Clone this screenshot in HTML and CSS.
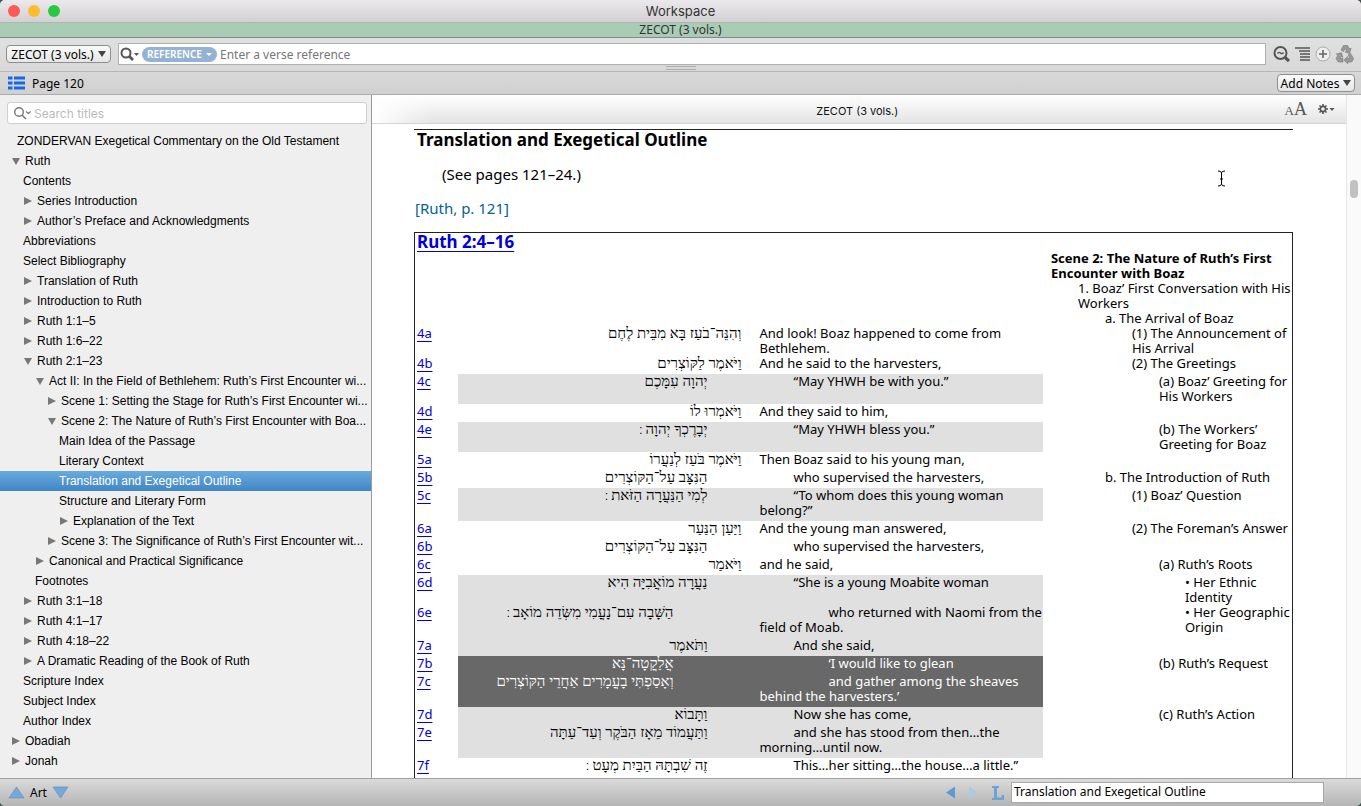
FILE: index.html
```html
<!DOCTYPE html>
<html lang="en">
<head>
    <meta charset="utf-8">
    <title>Workspace</title>
    <link rel="stylesheet" href="styles.css">
</head>
<body>
    <div class="window">
        <header class="titlebar">
            <div class="lights">
                <button class="light red" aria-label="Close"></button>
                <button class="light yellow" aria-label="Minimize"></button>
                <button class="light green" aria-label="Zoom"></button>
            </div>
            <h1>Workspace</h1>
        </header>
        <div class="tab">ZECOT (3 vols.)</div>

        <div class="toolbar">
            <button class="menu-btn module">ZECOT (3 vols.) <span class="down"></span></button>
            <div class="search">
                <svg width="19" height="15" viewBox="0 0 19 15"><circle cx="6" cy="6" r="4.500" fill="none" stroke="#555" stroke-width="2"/><path d="M9 9l4 4" stroke="#555" stroke-width="2.600"/><path d="M14 6h5l-2.500 3z" fill="#555"/></svg>
                <button class="pill">REFERENCE <span class="down small"></span></button>
                <input type="text" aria-label="Verse reference" placeholder="Enter a verse reference">
            </div>
            <div class="tools">
                <button aria-label="Search again"><svg width="18" height="18" viewBox="0 0 18 18"><circle cx="7.500" cy="8" r="6" fill="none" stroke="#555" stroke-width="2"/><path d="M12 12.500l4 3.500" stroke="#555" stroke-width="3"/><path d="M4.500 8.500q1.500-2 3-.5t3-.5" fill="none" stroke="#555" stroke-width="1.300"/></svg></button>
                <button aria-label="Outline"><svg width="16" height="16" viewBox="0 0 16 16"><path d="M0 2h15M4 5h11M5 8h10M5 11h10M5 14h10" stroke="#555" stroke-width="1.500"/></svg></button>
                <button aria-label="Add"><svg width="16" height="16" viewBox="0 0 16 16"><circle cx="8" cy="8" r="7" fill="#eee" stroke="#aaa"/><path d="M8 4v8M4 8h8" stroke="#666" stroke-width="1.600"/></svg></button>
                <button aria-label="Recycle"><svg width="20" height="20" viewBox="0 0 20 20" fill="#999" stroke="#777" stroke-width=".6"><path d="M6 6l2.500-4.500h4L14.500 5l1.700-.8L14.500 9.500 10 8l1.700-1L10.300 4.500 8.500 7.600z"/><path d="M15.500 9.500l3.200 5.200-2 3.300h-4v1.800L9 16l3.700-3.500V14.500h2.500l-2.200-3.600z"/><path d="M8 18H3.200L1 14.500 3 11 1.300 10 6.500 8.700 7.800 13.500 6 12.500l-1.200 2H8z"/></svg></button>
            </div>
        </div>
        <div class="grip"><span></span></div>

        <div class="subbar">
            <svg width="17" height="14" viewBox="0 0 17 14"><path d="M0 2h4.500M6 2h11M0 7h4.500M6 7h11M0 12h4.500M6 12h11" stroke="#1468ea" stroke-width="3"/></svg>
            <span class="page">Page 120</span>
            <button class="menu-btn notes">Add Notes <span class="down"></span></button>
        </div>

        <main class="main">
            <nav class="sidebar">
                <div class="filter">
                    <svg width="19" height="15" viewBox="0 0 19 15"><circle cx="6" cy="6" r="4.300" fill="none" stroke="#777" stroke-width="1.400"/><path d="M9 9l4 4" stroke="#777" stroke-width="1.600"/><path d="M13 5.500l2.300 2 2.300-2" fill="none" stroke="#777" stroke-width="1.200"/></svg>
                    <input type="text" aria-label="Search titles" placeholder="Search titles">
                </div>
                <ul class="toc">
                    <li class="root">ZONDERVAN Exegetical Commentary on the Old Testament</li>
                    <li class="open">Ruth</li>
                    <li class="l1">Contents</li>
                    <li class="l1 closed">Series Introduction</li>
                    <li class="l1 closed">Author’s Preface and Acknowledgments</li>
                    <li class="l1">Abbreviations</li>
                    <li class="l1">Select Bibliography</li>
                    <li class="l1 closed">Translation of Ruth</li>
                    <li class="l1 closed">Introduction to Ruth</li>
                    <li class="l1 closed">Ruth 1:1–5</li>
                    <li class="l1 closed">Ruth 1:6–22</li>
                    <li class="l1 open">Ruth 2:1–23</li>
                    <li class="l2 open">Act II: In the Field of Bethlehem: Ruth’s First Encounter wi...</li>
                    <li class="l3 closed">Scene 1: Setting the Stage for Ruth’s First Encounter wi...</li>
                    <li class="l3 open">Scene 2: The Nature of Ruth’s First Encounter with Boa...</li>
                    <li class="l4">Main Idea of the Passage</li>
                    <li class="l4">Literary Context</li>
                    <li class="l4 selected">Translation and Exegetical Outline</li>
                    <li class="l4">Structure and Literary Form</li>
                    <li class="l4 closed">Explanation of the Text</li>
                    <li class="l3 closed">Scene 3: The Significance of Ruth’s First Encounter wit...</li>
                    <li class="l2 closed">Canonical and Practical Significance</li>
                    <li class="l2">Footnotes</li>
                    <li class="l1 closed">Ruth 3:1–18</li>
                    <li class="l1 closed">Ruth 4:1–17</li>
                    <li class="l1 closed">Ruth 4:18–22</li>
                    <li class="l1 closed">A Dramatic Reading of the Book of Ruth</li>
                    <li class="l1">Scripture Index</li>
                    <li class="l1">Subject Index</li>
                    <li class="l1">Author Index</li>
                    <li class="closed">Obadiah</li>
                    <li class="closed">Jonah</li>
                </ul>
            </nav>

            <section class="reader">
                <div class="reader-head">
                    <span class="reader-title">ZECOT (3 vols.)</span>
                    <button class="font-size" aria-label="Text size"><small>A</small>A</button>
                    <button class="gear" aria-label="Settings"><svg width="17" height="12" viewBox="0 0 17 12"><circle cx="5" cy="6" r="2.600" fill="none" stroke="#555" stroke-width="1.600"/><path d="M5 1v2M5 9v2M0 6h2M8 6h2M1.500 2.500l1.300 1.300M7.200 8.200l1.300 1.300M1.500 9.500l1.300-1.300M7.200 3.800l1.300-1.300" stroke="#555" stroke-width="1.600"/><path d="M11.500 5h5l-2.500 3z" fill="#555"/></svg></button>
                </div>
                <article class="text">
                    <h2>Translation and Exegetical Outline</h2>
                    <p class="see">(See pages 121–24.)</p>
                    <p class="pageref">[Ruth, p. 121]</p>
                    <table>
                        <colgroup><col class="c-ref"><col class="c-heb"><col class="c-eng"><col class="c-out"></colgroup>
                        <tr class="passage"><td colspan="4"><a href="#">Ruth 2:4–16</a></td></tr>
                        <tr class="tight"><td></td><td></td><td></td><td class="out"><div><b>Scene 2: The Nature of Ruth’s First<br>Encounter with Boaz</b></div><div class="o1">1. Boaz’ First Conversation with His<br>Workers</div><div class="o2">a. The Arrival of Boaz</div></td></tr>
                        <tr class="tight"><td><a href="#">4a</a></td><td class="heb" lang="he">וְהִנֵּה־בֹעַז בָּא מִבֵּית לֶחֶם</td><td class="eng">And look! Boaz happened to come from<br>Bethlehem.</td><td class="out"><div class="o3">(1) The Announcement of<br>His Arrival</div></td></tr>
                        <tr><td><a href="#">4b</a></td><td class="heb" lang="he">וַיֹּאמֶר לַקּוֹצְרִים</td><td class="eng">And he said to the harvesters,</td><td class="out"><div class="o3">(2) The Greetings</div></td></tr>
                        <tr class="quote"><td><a href="#">4c</a></td><td class="heb in1" lang="he">יְהוָה עִמָּכֶם</td><td class="eng in1">“May YHWH be with you.”</td><td class="out"><div class="o4">(a) Boaz’ Greeting for<br>His Workers</div></td></tr>
                        <tr><td><a href="#">4d</a></td><td class="heb" lang="he">וַיֹּאמְרוּ לוֹ</td><td class="eng">And they said to him,</td><td class="out"></td></tr>
                        <tr class="quote"><td><a href="#">4e</a></td><td class="heb in1" lang="he">יְבָרֶכְךָ יְהוָה<span class="sof">׃</span></td><td class="eng in1">“May YHWH bless you.”</td><td class="out"><div class="o4">(b) The Workers’<br>Greeting for Boaz</div></td></tr>
                        <tr><td><a href="#">5a</a></td><td class="heb" lang="he">וַיֹּאמֶר בֹּעַז לְנַעֲרוֹ</td><td class="eng">Then Boaz said to his young man,</td><td class="out"></td></tr>
                        <tr><td><a href="#">5b</a></td><td class="heb in1" lang="he">הַנִּצָּב עַל־הַקּוֹצְרִים</td><td class="eng in1">who supervised the harvesters,</td><td class="out"><div class="o2">b. The Introduction of Ruth</div></td></tr>
                        <tr class="quote"><td><a href="#">5c</a></td><td class="heb in1" lang="he">לְמִי הַנַּעֲרָה הַזֹּאת<span class="sof">׃</span></td><td class="eng in1">“To whom does this young woman<br>belong?”</td><td class="out"><div class="o3">(1) Boaz’ Question</div></td></tr>
                        <tr><td><a href="#">6a</a></td><td class="heb" lang="he">וַיַּעַן הַנַּעַר</td><td class="eng">And the young man answered,</td><td class="out"><div class="o3">(2) The Foreman’s Answer</div></td></tr>
                        <tr><td><a href="#">6b</a></td><td class="heb in1" lang="he">הַנִּצָּב עַל־הַקּוֹצְרִים</td><td class="eng in1">who supervised the harvesters,</td><td class="out"></td></tr>
                        <tr><td><a href="#">6c</a></td><td class="heb" lang="he">וַיֹּאמַר</td><td class="eng">and he said,</td><td class="out"><div class="o4">(a) Ruth’s Roots</div></td></tr>
                        <tr class="quote"><td><a href="#">6d</a></td><td class="heb in1" lang="he">נַעֲרָה מוֹאֲבִיָּה הִיא</td><td class="eng in1">“She is a young Moabite woman</td><td class="out"><div class="o5">• Her Ethnic<br>Identity</div></td></tr>
                        <tr class="quote"><td><a href="#">6e</a></td><td class="heb in2" lang="he">הַשָּׁבָה עִם־נָעֳמִי מִשְּׂדֵה מוֹאָב<span class="sof">׃</span></td><td class="eng in2">who returned with Naomi from the<br>field of Moab.</td><td class="out"><div class="o5">• Her Geographic<br>Origin</div></td></tr>
                        <tr class="quote"><td><a href="#">7a</a></td><td class="heb in1" lang="he">וַתֹּאמֶר</td><td class="eng in1">And she said,</td><td class="out"></td></tr>
                        <tr class="inner"><td><a href="#">7b</a></td><td class="heb in2" lang="he">אֲלַקֳטָה־נָּא</td><td class="eng in2">‘I would like to glean</td><td class="out"><div class="o4">(b) Ruth’s Request</div></td></tr>
                        <tr class="inner"><td><a href="#">7c</a></td><td class="heb in2" lang="he">וְאָסַפְתִּי בָעֳמָרִים אַחֲרֵי הַקּוֹצְרִים</td><td class="eng in2">and gather among the sheaves<br>behind the harvesters.’</td><td class="out"></td></tr>
                        <tr class="quote"><td><a href="#">7d</a></td><td class="heb in1" lang="he">וַתָּבוֹא</td><td class="eng in1">Now she has come,</td><td class="out"><div class="o4">(c) Ruth’s Action</div></td></tr>
                        <tr class="quote"><td><a href="#">7e</a></td><td class="heb in1" lang="he">וַתַּעֲמוֹד מֵאָז הַבֹּקֶר וְעַד־עַתָּה</td><td class="eng in1">and she has stood from then…the<br>morning…until now.</td><td class="out"></td></tr>
                        <tr class="last"><td><a href="#">7f</a></td><td class="heb in1" lang="he">זֶה שִׁבְתָּהּ הַבַּיִת מְעָט<span class="sof">׃</span></td><td class="eng in1">This…her sitting…the house…a little.”</td><td class="out"></td></tr>
                    </table>
                </article>
                <svg class="ibeam" width="9" height="17" viewBox="0 0 9 17"><path d="M1 1q3.500 0 3.500 2v11q0 2-3.500 2M8 1q-3.500 0-3.500 2M8 16q-3.500 0-3.500-2M3 9h3" fill="none" stroke="#000"/></svg>
            </section>
            <div class="scroll"><span class="thumb"></span></div>
        </main>

        <footer class="footer">
            <button aria-label="Previous article"><svg width="17" height="13" viewBox="0 0 17 13"><path d="M8.500 1L16 12H1z" fill="#76a9d8" stroke="#6690b8" stroke-width=".7"/></svg></button>
            <span class="kind">Art</span>
            <button aria-label="Next article"><svg width="17" height="13" viewBox="0 0 17 13"><path d="M8.500 12L16 1H1z" fill="#76a9d8" stroke="#6690b8" stroke-width=".7"/></svg></button>
            <div class="history">
                <button aria-label="Back"><svg width="10" height="13" viewBox="0 0 10 13"><path d="M0 6.500L9 0.500v12z" fill="#5c9bd2"/></svg></button>
                <button aria-label="Forward"><svg width="10" height="13" viewBox="0 0 10 13"><path d="M9 6.500L0 0.500v12z" fill="#a9cbe6"/></svg></button>
                <button aria-label="Library"><svg width="12" height="14" viewBox="0 0 12 14"><path d="M0 0h7v2H5v9.500h4.500L10 9h2v5H0v-2h2V2H0z" fill="#6ba3d3"/></svg></button>
                <input type="text" aria-label="Location" value="Translation and Exegetical Outline">
            </div>
        </footer>
    </div>
</body>
</html>
```
FILE: styles.css
```css
* {
    box-sizing: border-box;
}

body {
    margin: 0;
    background: #3d5548;
    font-family: "Noto Sans", "Open Sans", sans-serif;
    font-size: 12px;
    color: #000;
}

button {
    font-family: inherit;
    padding: 0;
    border: none;
    background: none;
    color: inherit;
}

svg {
    display: block;
    flex: none;
}

.window {
    height: 100vh;
    display: flex;
    flex-direction: column;
    border-radius: 5px;
    overflow: hidden;
    background: #dadada;
}

.titlebar {
    flex: none;
    height: 23px;
    display: grid;
    grid-template-columns: 1fr auto 1fr;
    align-items: center;
    padding: 0 8px;
    background: linear-gradient(#ebe9eb, #d3d0d3);
    border-bottom: 1px solid #b3b3b3;
}

.titlebar h1 {
    margin: 0;
    font: 13px Inter, sans-serif;
    color: #333;
}

.lights {
    display: flex;
    gap: 8px;
}

.light {
    width: 12px;
    height: 12px;
    border-radius: 50%;
}

.red { background: #fc5b57; }
.yellow { background: #fdbc2e; }
.green { background: #28c840; }

.tab {
    flex: none;
    height: 15px;
    line-height: 14px;
    text-align: center;
    color: #333;
    background: #a8ccb4;
    border-bottom: 1px solid #878787;
}

.toolbar {
    flex: none;
    height: 28px;
    display: flex;
    align-items: center;
    gap: 7px;
    padding: 4px 6px 0;
    background: linear-gradient(#e0e0e0, #d9d9d9);
}

.menu-btn {
    display: flex;
    align-items: center;
    justify-content: center;
    gap: 4px;
    height: 18px;
    font-size: 12px;
    border: 1px solid #8e8e8e;
    border-radius: 4px;
    background: linear-gradient(#fafafa, #e6e6e6);
    white-space: nowrap;
}

.module {
    width: 105px;
}

.notes {
    width: 78px;
    margin-left: auto;
}

.down {
    border: 4px solid transparent;
    border-top: 6px solid #444;
    border-bottom: none;
}

.down.small {
    border-width: 3px 3px 0;
    border-top-color: #fff;
}

.search {
    flex: 1;
    display: flex;
    align-items: center;
    height: 22px;
    padding-left: 1px;
    gap: 3px;
    background: #fff;
    border: 1px solid #b0b0b0;
}

.pill {
    display: flex;
    align-items: center;
    justify-content: center;
    gap: 4px;
    width: 75px;
    height: 15px;
    border-radius: 8px;
    background: #94b3d4;
    color: #fff;
    font-size: 10px;
    font-weight: 600;
}

.search input,
.filter input {
    flex: 1;
    min-width: 0;
    padding: 0;
    border: none;
    outline: none;
    background: none;
    font: inherit;
}

.search input::placeholder {
    color: #777;
}

.tools {
    display: flex;
    align-items: center;
    gap: 4px;
}

.grip {
    flex: none;
    height: 6px;
    background: #d9d9d9;
    border-bottom: 1px solid #b5b5b5;
}

.grip span {
    display: block;
    width: 30px;
    height: 4px;
    margin: 0 auto;
    border: 1px solid #aeaeae;
    border-width: 1px 0;
}

.subbar {
    flex: none;
    height: 23px;
    display: flex;
    align-items: center;
    gap: 7px;
    padding: 0 6px 0 8px;
    background: linear-gradient(#d8d8d8, #d0d0d0);
    border-bottom: 1px solid #ababab;
}

.main {
    flex: 1;
    min-height: 0;
    display: flex;
    background: #fff;
}

.sidebar {
    flex: none;
    width: 372px;
    padding-top: 7px;
    background: #efefef;
    border-right: 1px solid #9b9b9b;
    font-family: "Liberation Sans", Arial, sans-serif;
    font-size: 12px;
    overflow: hidden;
}

.filter {
    display: flex;
    align-items: center;
    gap: 2px;
    height: 22px;
    margin: 0 4px 7px 7px;
    padding-left: 5px;
    background: #fff;
    border: 1px solid #cfcfcf;
    border-radius: 3px;
    font-family: Inter, sans-serif;
}

.filter input::placeholder {
    color: #bbb;
}

.toc {
    margin: 0;
    padding: 0;
    list-style: none;
}

.toc li {
    height: 20px;
    line-height: 20px;
    padding-left: 11px;
    white-space: nowrap;
}

.toc li.root { padding-left: 17px; }
.toc li.l1 { padding-left: 23px; }
.toc li.l2 { padding-left: 35px; }
.toc li.l3 { padding-left: 47px; }
.toc li.l4 { padding-left: 59px; }

.toc .closed::before,
.toc .open::before {
    content: "";
    display: inline-block;
    margin: 0 5px 0 1px;
    border: 0 solid transparent;
}

.toc .closed::before {
    border-width: 4px 0 4px 8px;
    border-left-color: #777;
}

.toc .open::before {
    border-width: 7px 4px 0;
    border-top-color: #777;
}

.toc .selected {
    color: #fff;
    background: linear-gradient(#69abdd, #4086c6);
}

.reader {
    flex: 1;
    min-width: 0;
    position: relative;
    display: flex;
    flex-direction: column;
    overflow: hidden;
}

.reader-head {
    flex: none;
    height: 29px;
    display: flex;
    align-items: center;
    gap: 11px;
    padding-right: 11px;
    color: #111;
    font-family: Inter, sans-serif;
    font-size: 11px;
    background: linear-gradient(90deg, #fff, transparent 60px), linear-gradient(#fff, #e4e4e4);
    border-bottom: 1px solid #d5d5d5;
}

.reader-title {
    flex: 1;
    padding: 4px 0 0 69px;
    text-align: center;
}

.font-size {
    font-family: "Liberation Serif", serif;
    font-size: 18px;
    color: #555;
}

.font-size small {
    font-size: 13px;
}

.text {
    margin: 5px 53px 0 42px;
    font-size: 13px;
    line-height: 15px;
    white-space: nowrap;
}

.text h2 {
    margin: 0;
    padding-left: 3px;
    border-top: 1px solid #222;
    font-size: 17px;
    line-height: 20px;
}

.text p {
    margin: 0;
    font-size: 15px;
    line-height: 20px;
}

.text .see {
    padding: 14px 0 0 28px;
}

.text .pageref {
    padding: 14px 0 14px 1px;
    color: #066196;
}

table {
    width: 100%;
    table-layout: fixed;
    border-collapse: separate;
    border-spacing: 0;
    border: 1px solid #222;
    border-bottom: none;
}

.c-ref { width: 43px; }
.c-out { width: 249px; }

td {
    padding: 0 0 3px 2px;
    vertical-align: top;
}

td a {
    color: #0000d8;
    text-underline-offset: 3px;
}

.passage td {
    height: 18px;
    padding-bottom: 0;
    font-size: 17px;
    line-height: 18px;
    font-weight: bold;
}

.heb {
    direction: rtl;
    padding-right: 9px;
    font-family: "Liberation Serif", "Times New Roman", serif;
    font-size: 15px;
}

.heb.in1 { padding-right: 43px; }
.heb.in2 { padding-right: 77px; }

.sof {
    padding-right: 3px;
    font-family: "DejaVu Sans", sans-serif;
    font-size: 12px;
    line-height: 1px;
}

.eng { padding-left: 9px; }
.eng.in1 { text-indent: 34px; }
.eng.in2 { text-indent: 69px; }

.out {
    padding: 0 0 0 8px;
}

.o1 { padding-left: 27px; }
.o2 { padding-left: 54px; }
.o3 { padding-left: 81px; }
.o4 { padding-left: 108px; }
.o5 { padding-left: 134px; }

.tight td {
    padding-bottom: 0;
}

.quote .heb,
.quote .eng {
    background: #e0e0e0;
}

.inner .heb,
.inner .eng {
    color: #fff;
    background: #686868;
}

.last td {
    padding-bottom: 12px;
}

.ibeam {
    position: absolute;
    top: 75px;
    right: 120px;
}

.scroll {
    flex: none;
    width: 15px;
    padding: 85px 3px 0;
    background: #fafafa;
    border-left: 1px solid #e6e6e6;
}

.thumb {
    display: block;
    width: 8px;
    height: 18px;
    border-radius: 4px;
    background: #c1c1c1;
}

.footer {
    flex: none;
    height: 28px;
    display: flex;
    align-items: center;
    gap: 5px;
    padding: 0 37px 0 8px;
    background: linear-gradient(#dadada, #b5b5b5);
    border-top: 1px solid #a0a0a0;
}

.history {
    display: flex;
    align-items: center;
    gap: 13px;
    margin-left: auto;
}

.history input {
    width: 313px;
    height: 21px;
    margin-left: -6px;
    padding: 0 0 2px 2px;
    border: 1px solid #a8a8a8;
    background: #fff;
    font: inherit;
}
```
